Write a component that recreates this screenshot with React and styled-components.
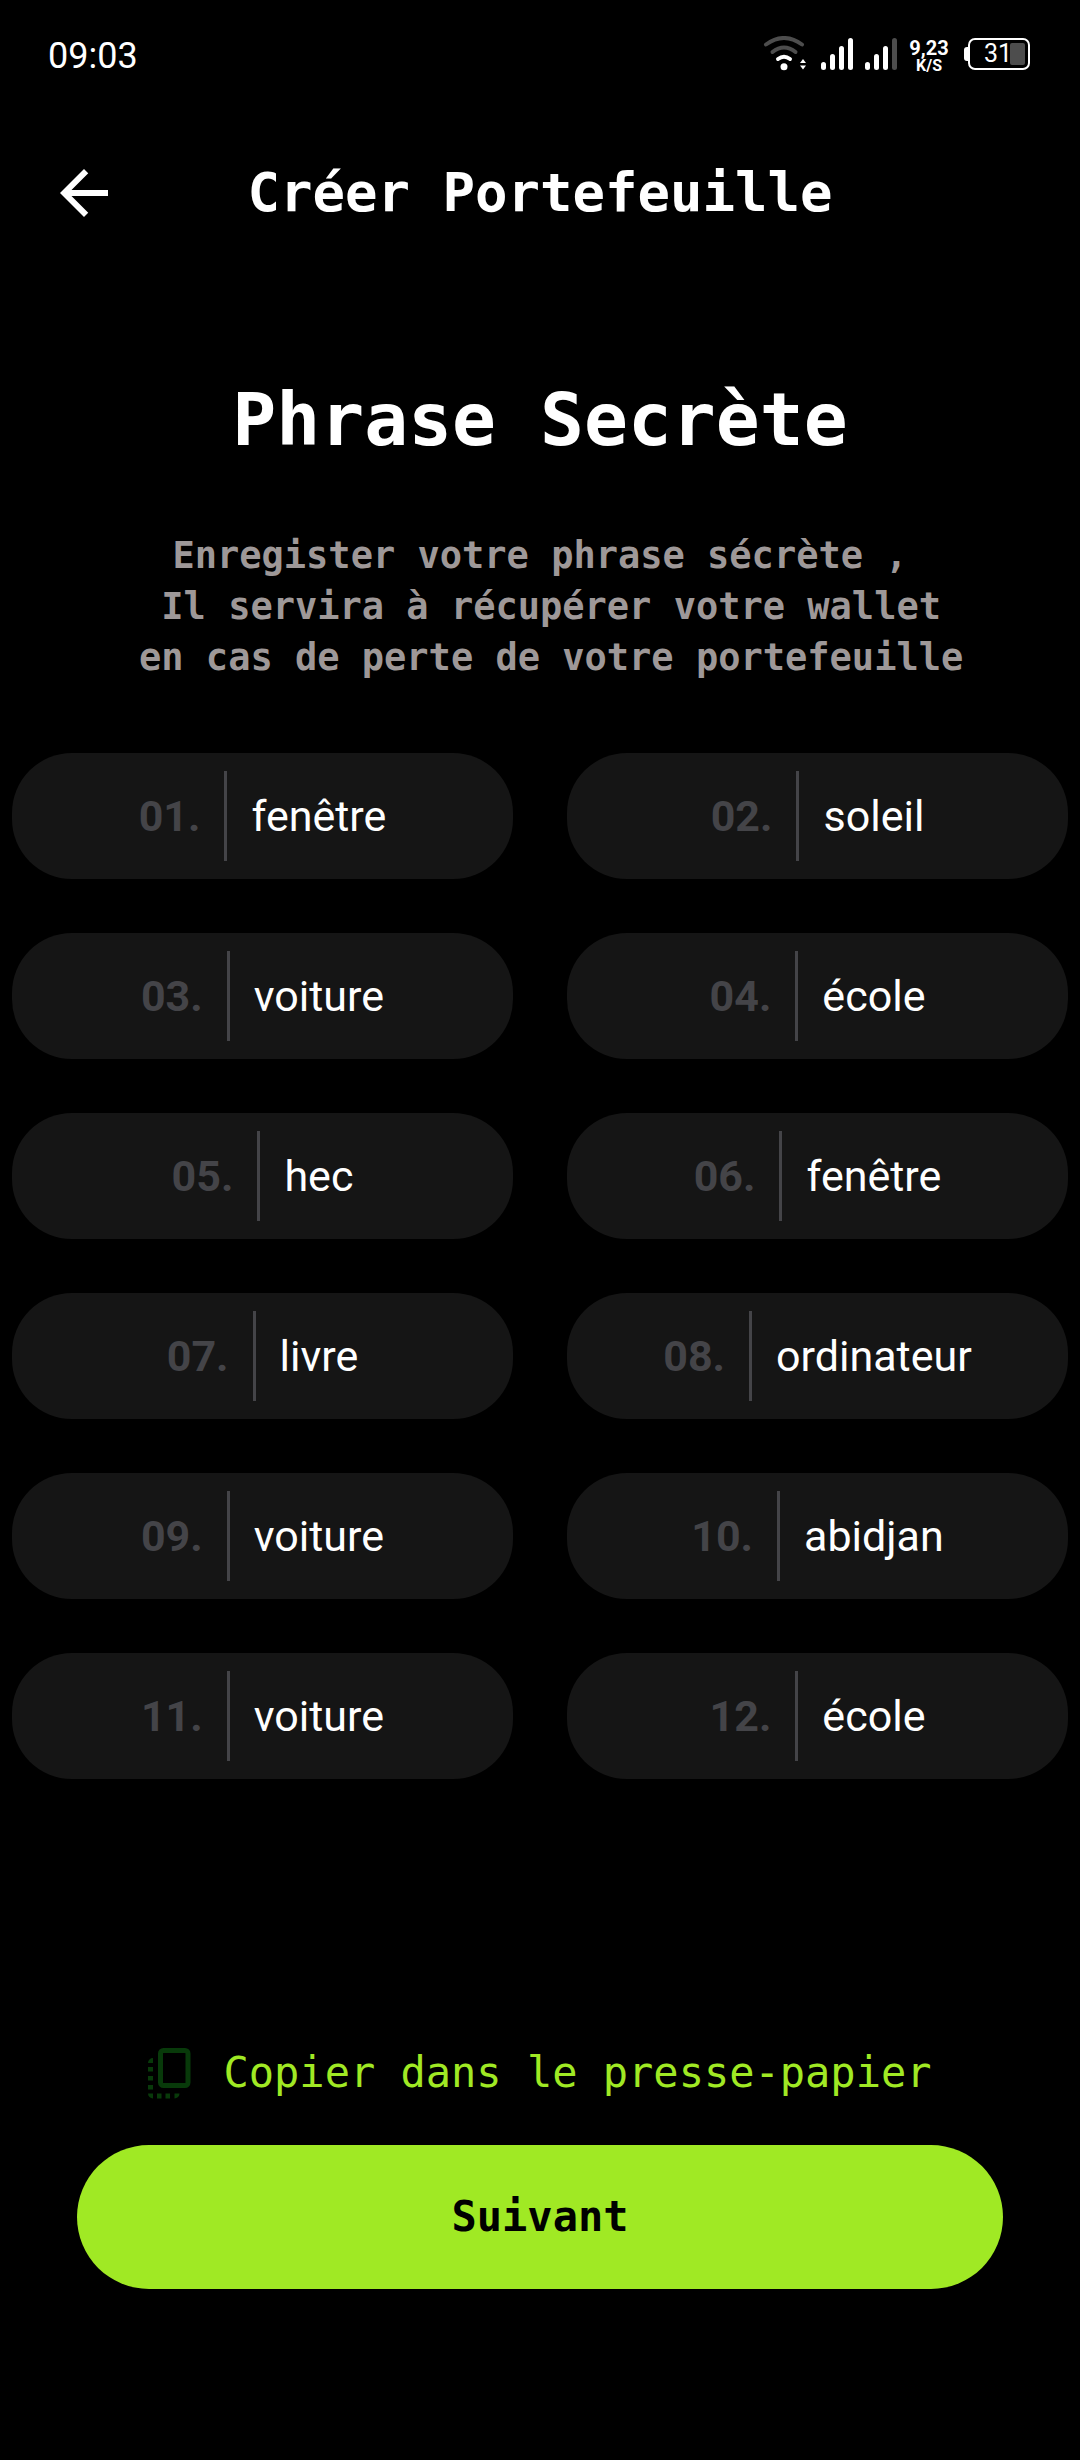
import React from "react";
import styled, { createGlobalStyle } from "styled-components";

const mono = '"DejaVu Sans Mono", "Liberation Mono", monospace';
const sans = 'Roboto, "Noto Sans", sans-serif';

const colors = {
  background: "#000000",
  text: "#ffffff",
  muted: "#9e9898",
  chip: "#151515",
  chipNumber: "#444448",
  accent: "#a0e924",
  copyIcon: "#083a0a",
  dim: "#4d4d4d",
};

const words = [
  "fenêtre",
  "soleil",
  "voiture",
  "école",
  "hec",
  "fenêtre",
  "livre",
  "ordinateur",
  "voiture",
  "abidjan",
  "voiture",
  "école",
];

const GlobalStyle = createGlobalStyle`
  *, *::before, *::after { box-sizing: border-box; }
  html { background: ${colors.background}; }
  body { margin: 0; background: ${colors.background}; color: ${colors.text}; font-family: ${sans}; }
  h1, h2, p, ol { margin: 0; padding: 0; }
  button { border: 0; padding: 0; background: none; font: inherit; color: inherit; cursor: pointer; }
`;

const Screen = styled.div`
  min-height: 100vh;
  display: flex;
  flex-direction: column;
`;

const StatusBar = styled.div`
  display: flex;
  align-items: center;
  justify-content: space-between;
  height: 112px;
  padding: 0 50px 0 48px;
`;

const Clock = styled.time`
  font-size: 36px;
  line-height: 42px;
`;

const Indicators = styled.div`
  display: flex;
  align-items: center;
  padding-bottom: 4px;
`;

const Signals = styled.div`
  display: flex;
  gap: 12px;
  margin-left: 12px;
`;

const Speed = styled.div`
  display: flex;
  flex-direction: column;
  align-items: center;
  width: 40px;
  margin: 0 15px 0 12px;
  padding-top: 4px;
  font-weight: 700;
  font-size: 20px;
  line-height: 20px;
`;

const SpeedUnit = styled.span`
  font-size: 16px;
  line-height: 16px;
`;

const Battery = styled.div`
  display: flex;
  align-items: center;
`;

const BatteryCap = styled.span`
  width: 4px;
  height: 14px;
  border-radius: 3px 0 0 3px;
  background: ${colors.text};
`;

const BatteryShell = styled.span`
  display: flex;
  align-items: center;
  justify-content: flex-end;
  width: 62px;
  height: 32px;
  padding-right: 3px;
  border: 2px solid ${colors.text};
  border-radius: 7px;
  font-size: 25px;
  line-height: 28px;
`;

const BatteryFill = styled.span`
  width: 15px;
  height: 22px;
  margin-left: -2px;
  border-radius: 2px;
  background: ${colors.dim};
`;

const Header = styled.header`
  display: grid;
  grid-template-columns: 72px 1fr 72px;
  align-items: center;
  height: 162px;
  padding: 0 48px;
`;

const BackButton = styled.button`
  display: flex;
  width: 72px;
  height: 72px;
`;

const Title = styled.h1`
  font-family: ${mono};
  font-size: 54px;
  line-height: 72px;
  text-align: center;
`;

const Main = styled.main`
  flex: 1;
  display: flex;
  flex-direction: column;
`;

const Heading = styled.h2`
  margin-top: 98px;
  font-family: ${mono};
  font-size: 73px;
  line-height: 96px;
  text-align: center;
`;

const Intro = styled.p`
  margin-top: 62px;
  font-family: ${mono};
  font-weight: 700;
  font-size: 37px;
  line-height: 51px;
  color: ${colors.muted};
  text-align: center;
  white-space: pre-wrap;
`;

const WordGrid = styled.ol`
  display: grid;
  grid-template-columns: 1fr 1fr;
  gap: 54px;
  margin-top: 70px;
  padding: 0 12px;
  list-style: none;
`;

const Chip = styled.li`
  display: flex;
  align-items: center;
  justify-content: center;
  gap: 24px;
  height: 126px;
  border-radius: 60px;
  background: ${colors.chip};
  font-size: 43px;
  line-height: 60px;
`;

const ChipNumber = styled.span`
  font-weight: 700;
  color: ${colors.chipNumber};
`;

const ChipDivider = styled.span`
  width: 3px;
  height: 90px;
  background: ${colors.chipNumber};
`;

const Actions = styled.footer`
  display: flex;
  flex-direction: column;
  gap: 36px;
  margin-top: auto;
  padding: 0 77px 171px;
`;

const CopyButton = styled.button`
  display: flex;
  align-items: center;
  justify-content: center;
  gap: 32px;
  height: 72px;
  font-family: ${mono};
  font-size: 42px;
  line-height: 60px;
  color: ${colors.accent};
`;

const NextButton = styled.button`
  height: 144px;
  border-radius: 72px;
  background: ${colors.accent};
  font-family: ${mono};
  font-weight: 700;
  font-size: 42px;
  line-height: 60px;
  color: ${colors.background};
`;

const WifiIcon = () => (
  <svg width="46" height="36" viewBox="0 0 46 36" fill="none" strokeWidth="4" strokeLinecap="round" aria-hidden="true">
    <path d="M3 8.500Q21 -4.500 39 8.500" stroke={colors.dim} />
    <path d="M9.500 16Q21 7 32.500 16" stroke={colors.dim} />
    <path d="M15 23Q21 18.500 27 23" stroke="#fff" />
    <circle cx="21" cy="30.700" r="3.500" fill="#fff" />
    <path d="M37 27L40 23L43 27ZM37 29.500L40 33.500L43 29.500Z" fill="#fff" />
  </svg>
);

const SignalIcon = ({ level }) => (
  <svg width="32" height="34" viewBox="0 0 32 34" strokeWidth="5" strokeLinecap="round" aria-hidden="true">
    {[27.5, 19.5, 11.5, 3.5].map((top, i) => (
      <path key={top} d={`M${2.5 + i * 9} ${top}V30.5`} stroke={i < level ? "#fff" : colors.dim} />
    ))}
  </svg>
);

const BackIcon = () => (
  <svg width="72" height="72" viewBox="0 0 24 24" fill="#fff" aria-hidden="true">
    <path d="M20 11H7.830l5.590-5.590L12 4l-8 8 8 8 1.410-1.410L7.830 13H20z" />
  </svg>
);

const CopyIcon = () => (
  <svg width="43" height="51" viewBox="0 0 43 51" fill="none" aria-hidden="true">
    <rect x="12.500" y="2.500" width="27.500" height="35" rx="3" stroke={colors.copyIcon} strokeWidth="5" />
    <path
      d="M0 15a5 5 0 0 1 5-5v5zM0 19h5v4.500H0zM0 28h5v4.500H0zM0 37h5v4.500H0zM0 45.500h5v5a5 5 0 0 1-5-5zM9 45.500h4.500v5H9zM17.500 45.500h4.500v5h-4.500zM26.500 45.500h5a5 5 0 0 1-5 5z"
      fill={colors.copyIcon}
    />
  </svg>
);

export default function App() {
  return (
    <Screen>
      <GlobalStyle />
      <StatusBar>
        <Clock>09:03</Clock>
        <Indicators>
          <WifiIcon />
          <Signals>
            <SignalIcon level={4} />
            <SignalIcon level={3} />
          </Signals>
          <Speed>
            9,23
            <SpeedUnit>K/S</SpeedUnit>
          </Speed>
          <Battery>
            <BatteryCap />
            <BatteryShell>
              31
              <BatteryFill />
            </BatteryShell>
          </Battery>
        </Indicators>
      </StatusBar>
      <Header>
        <BackButton type="button" aria-label="Retour">
          <BackIcon />
        </BackButton>
        <Title>Créer Portefeuille</Title>
      </Header>
      <Main>
        <Heading>Phrase Secrète</Heading>
        <Intro>
          {"Enregister votre phrase sécrète ,\n\u00a0Il servira à récupérer votre wallet\n\u00a0en cas de perte de votre portefeuille"}
        </Intro>
        <WordGrid>
          {words.map((word, i) => (
            <Chip key={i}>
              <ChipNumber>{String(i + 1).padStart(2, "0")}.</ChipNumber>
              <ChipDivider />
              <span>{word}</span>
            </Chip>
          ))}
        </WordGrid>
        <Actions>
          <CopyButton type="button">
            <CopyIcon />
            Copier dans le presse-papier
          </CopyButton>
          <NextButton type="button">Suivant</NextButton>
        </Actions>
      </Main>
    </Screen>
  );
}
